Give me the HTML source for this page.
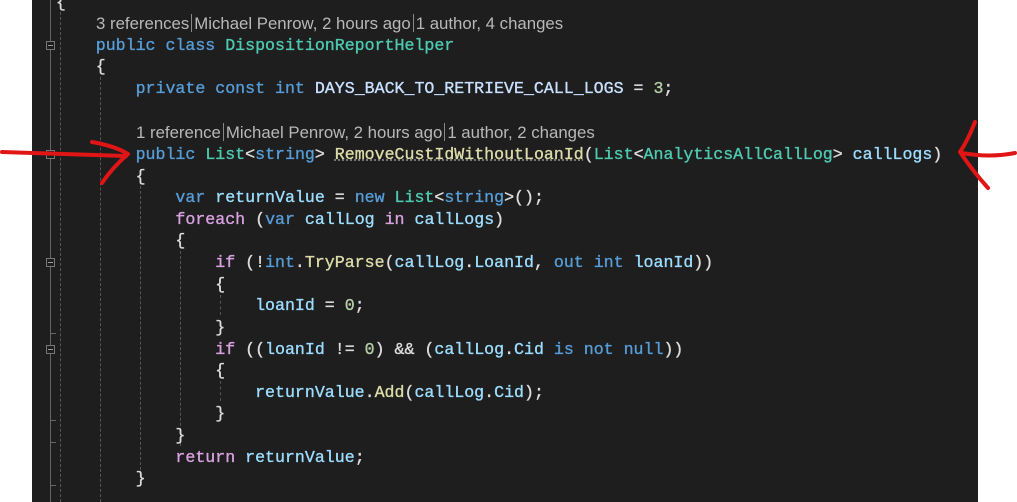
<!DOCTYPE html>
<html><head><meta charset="utf-8"><style>
body{margin:0;width:1017px;height:502px;background:#fff;position:relative;overflow:hidden}
#ed{position:absolute;left:32px;top:0;width:946px;height:502px;background:#1e1e1e}
.l{position:absolute;left:4px;height:22px;line-height:22px;white-space:pre;font-family:"Liberation Mono",monospace;font-size:16.6px;color:#dcdcdc;-webkit-text-stroke:0.35px}
.cl{font-family:"Liberation Sans",sans-serif;font-size:16.8px;color:#b8b8b8;-webkit-text-stroke:0}
.sp{display:inline-block;width:1px;height:18px;background:#888;vertical-align:-3px;margin:0 2px}
.k{color:#569cd6}.t{color:#4ec9b0}.v{color:#9cdcfe}.m{color:#dcdcaa}.p{color:#d8a0df}.n{color:#b5cea8}.c{color:#c8e0ff}
.g{position:absolute;width:0;border-left:1px dashed #555}
.fb{position:absolute;left:14px;width:7px;height:7px;border:1px solid #777;background:#1e1e1e}
.fb:after{content:"";position:absolute;left:1px;top:3px;width:5px;height:1px;background:#999}
.tk{position:absolute;left:18px;width:6px;height:1px;background:#666}
</style></head><body>
<div id="ed">
<div style="position:absolute;left:18px;top:0;width:1px;height:502px;background:#666"></div>
<div class="g" style="left:28px;top:12px;height:490px"></div>
<div class="g" style="left:68px;top:77px;height:425px"></div>
<div class="g" style="left:108px;top:186px;height:284px"></div>
<div class="g" style="left:148px;top:251px;height:195px"></div>
<div class="g" style="left:188px;top:295px;height:20px"></div>
<div class="g" style="left:188px;top:381px;height:20px"></div>
<div class="fb" style="top:41px"></div>
<div class="fb" style="top:150px"></div>
<div class="fb" style="top:258px"></div>
<div class="fb" style="top:345px"></div>
<div class="tk" style="top:333px"></div><div class="tk" style="top:420px"></div><div class="tk" style="top:442px"></div><div class="tk" style="top:485px"></div>
<div class="l" style="top:-8px">  {</div>
<div class="l cl" style="top:13px;left:64px">3 references<span class="sp"></span>Michael Penrow, 2 hours ago<span class="sp"></span>1 author, 4 changes</div>
<div class="l" style="top:35px">      <span class="k">public class</span> <span class="t">DispositionReportHelper</span></div>
<div class="l" style="top:56px">      {</div>
<div class="l" style="top:78px">          <span class="k">private const int</span> <span class="c">DAYS_BACK_TO_RETRIEVE_CALL_LOGS</span> = <span class="n">3</span>;</div>
<div class="l cl" style="top:122px;left:104px">1 reference<span class="sp"></span>Michael Penrow, 2 hours ago<span class="sp"></span>1 author, 2 changes</div>
<div class="l" style="top:144px">          <span class="k">public</span> <span class="t">List</span>&lt;<span class="k">string</span>&gt; <span class="m" style="text-decoration:underline dotted #888">RemoveCustIdWithoutLoanId</span>(<span class="t">List</span>&lt;<span class="t">AnalyticsAllCallLog</span>&gt; <span class="v">callLogs</span>)</div>
<div class="l" style="top:166px">          {</div>
<div class="l" style="top:187px">              <span class="k">var</span> <span class="v">returnValue</span> = <span class="k">new</span> <span class="t">List</span>&lt;<span class="k">string</span>&gt;();</div>
<div class="l" style="top:209px">              <span class="p">foreach</span> (<span class="k">var</span> <span class="v">callLog</span> <span class="p">in</span> <span class="v">callLogs</span>)</div>
<div class="l" style="top:230px">              {</div>
<div class="l" style="top:252px">                  <span class="p">if</span> (!<span class="k">int</span>.<span class="m">TryParse</span>(<span class="v">callLog</span>.<span class="v">LoanId</span>, <span class="k">out int</span> <span class="v">loanId</span>))</div>
<div class="l" style="top:274px">                  {</div>
<div class="l" style="top:295px">                      <span class="v">loanId</span> = <span class="n">0</span>;</div>
<div class="l" style="top:317px">                  }</div>
<div class="l" style="top:339px">                  <span class="p">if</span> ((<span class="v">loanId</span> != <span class="n">0</span>) &amp;&amp; (<span class="v">callLog</span>.<span class="v">Cid</span> <span class="k">is not null</span>))</div>
<div class="l" style="top:360px">                  {</div>
<div class="l" style="top:382px">                      <span class="v">returnValue</span>.<span class="m">Add</span>(<span class="v">callLog</span>.<span class="v">Cid</span>);</div>
<div class="l" style="top:403px">                  }</div>
<div class="l" style="top:425px">              }</div>
<div class="l" style="top:447px">              <span class="p">return</span> <span class="v">returnValue</span>;</div>
<div class="l" style="top:468px">          }</div>
</div>
<svg style="position:absolute;left:0;top:0" width="1017" height="502">
<g fill="none" stroke="#e01515" stroke-width="4" stroke-linecap="round" stroke-linejoin="round">
<path d="M2 152 L126 156"/><path d="M92 142 Q115 146 128 154 Q112 168 102 183"/>
<path d="M975 122 Q968 140 960 152 Q972 170 988 188"/><path d="M962 153 Q990 158 1015 153"/>
</g></svg>
</body></html>
